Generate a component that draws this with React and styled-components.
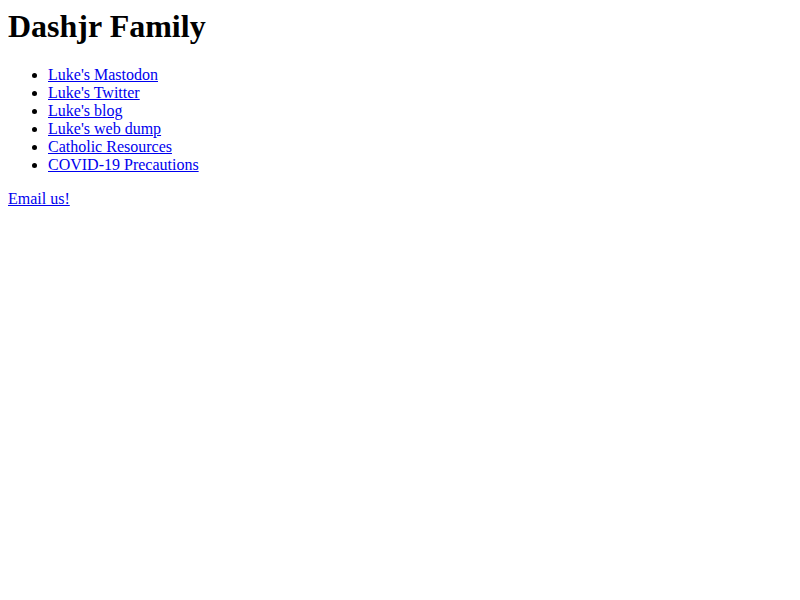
import React from "react";
import styled, { createGlobalStyle } from "styled-components";

const Global = createGlobalStyle`
  body {
    margin: 8px;
    font-family: "Liberation Serif", "Times New Roman", serif;
    font-size: 16px;
    color: #000;
    background: #fff;
  }
`;

const Title = styled.h1`
  font-size: 32px;
  font-weight: bold;
  margin: 0 0 21.44px;
`;

const List = styled.ul`
  margin: 16px 0;
  padding-left: 40px;
  list-style: disc;
`;

const Item = styled.li`
  line-height: normal;
`;

const Link = styled.a`
  color: #0000ee;
  text-decoration: underline;
`;

const Para = styled.p`
  margin: 16px 0;
`;

const links = [
  "Luke's Mastodon",
  "Luke's Twitter",
  "Luke's blog",
  "Luke's web dump",
  "Catholic Resources",
  "COVID-19 Precautions",
];

export default function App() {
  return (
    <>
      <Global />
      <Title>Dashjr Family</Title>
      <List>
        {links.map((l) => (
          <Item key={l}>
            <Link href="#">{l}</Link>
          </Item>
        ))}
      </List>
      <Para>
        <Link href="#">Email us!</Link>
      </Para>
    </>
  );
}
